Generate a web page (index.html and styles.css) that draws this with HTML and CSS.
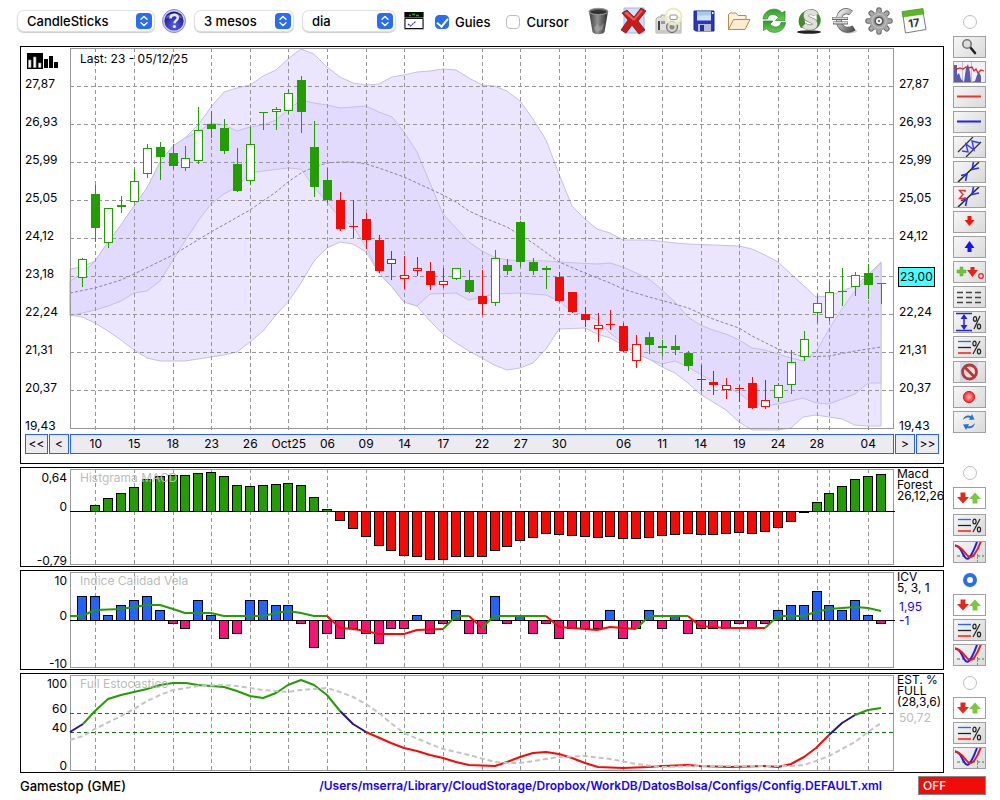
FILE: index.html
```html
<!DOCTYPE html>
<html lang="ca">
<head>
<meta charset="utf-8">
<title>Gamestop (GME)</title>
<link rel="stylesheet" href="styles.css">
</head>
<body>
<svg class="defs" aria-hidden="true">
  <defs>
    <linearGradient id="gMetal" x1="0" y1="0" x2="1" y2="1"><stop offset="0" stop-color="#f4f4f4"/><stop offset=".5" stop-color="#a0a0a0"/><stop offset="1" stop-color="#4c4c4c"/></linearGradient>
    <linearGradient id="gBin" x1="0" x2="1"><stop offset="0" stop-color="#3c3c3c"/><stop offset=".45" stop-color="#909090"/><stop offset="1" stop-color="#2c2c2c"/></linearGradient>
    <linearGradient id="gGreen" x1="0" y1="0" x2="0" y2="1"><stop offset="0" stop-color="#2f9a2c"/><stop offset="1" stop-color="#6ccc55"/></linearGradient>
    <radialGradient id="gHelp" cx=".5" cy=".75" r=".7"><stop offset="0" stop-color="#5a62e6"/><stop offset="1" stop-color="#15157e"/></radialGradient>
    <radialGradient id="gRec"><stop offset="0" stop-color="#ffb0b0"/><stop offset="1" stop-color="#f02828"/></radialGradient>
  </defs>
  <symbol id="chev" viewBox="0 0 16 16"><rect width="16" height="16" rx="4" fill="#2a6df5"/><path d="M5 6.300 8 3.500l3 2.800M5 9.700l3 2.800 3-2.800" fill="none" stroke="#fff" stroke-width="1.500" stroke-linecap="round" stroke-linejoin="round"/></symbol>
  <symbol id="updown" viewBox="1 1 31 20"><path d="M7.500 5.500h5v4.500h3.500l-6 6.500-6-6.500h3.500z" fill="#e0281c"/><path d="M19.500 16.500h5V12h3.500l-6-6.500-6 6.500h3.500z" fill="#7cc83c"/></symbol>
  <symbol id="levels" viewBox="1 1 31 20"><path d="M5 5.500h13" stroke="#2c62ff" stroke-width="1.300"/><path d="M5 11.500h13" stroke="#222" stroke-width="1.300"/><path d="M5 17h13" stroke="#f85040" stroke-width="2"/><g fill="none" stroke="#222" stroke-width="1.200"><path d="M20 18 27 5"/><ellipse cx="21.500" cy="7.500" rx="1.600" ry="2.300"/><ellipse cx="26" cy="15.500" rx="1.600" ry="2.300"/></g></symbol>
  <symbol id="cross" viewBox="1 1 31 20"><path d="M4 15h27" stroke="#2f8a20" stroke-dasharray="3 2"/><path d="M24.500 13v8" stroke="#888" stroke-dasharray="2 1"/><path d="M2 4.500c5 0 6 5 8 8.500 2 4 4 6 6 4s5-8 8-16" fill="none" stroke="#1c1cf0" stroke-width="2"/><path d="M2 4.500c6 1 8 5 11 8.500 3 4 5 4 8 1 3-4 5-8 7-14" fill="none" stroke="#e81c1c" stroke-width="2"/></symbol>
</svg>

<div class="page">
  <main class="main">
    <form class="toolbar">
      <span class="pick pick-type"><select aria-label="Tipus de gràfic"><option>CandleSticks</option></select><svg><use href="#chev"/></svg></span>
      <button type="button" class="icon help" aria-label="Ajuda"><svg viewBox="0 0 24 24"><circle cx="12" cy="12" r="11.500" fill="#c9c9ee" stroke="#8888d0"/><circle cx="12" cy="12" r="9.600" fill="url(#gHelp)"/><path d="M3.500 9.500a9 7.500 0 0 1 17 0c-5-2.500-12-2.500-17 0z" fill="#8f93ea" opacity=".6"/><path d="M8.500 9.500c0-5 7.500-5 7.300-.5-.2 2.400-3.300 2.500-3.300 5.200" fill="none" stroke="#e8e8fa" stroke-width="2.500"/><circle cx="12.400" cy="17.500" r="1.600" fill="#e8e8fa"/></svg></button>
      <span class="pick pick-span"><select aria-label="Període"><option>3 mesos</option></select><svg><use href="#chev"/></svg></span>
      <span class="pick pick-unit"><select aria-label="Interval"><option>dia</option></select><svg><use href="#chev"/></svg></span>
      <button type="button" class="icon play" aria-label="Mostra"><svg viewBox="0 0 20 18"><path d="M0 0h20v18H0z" fill="#bbb"/><path d="M.5 0h19v5.500H.5z" fill="#0a0a0a"/><path d="M5 3.500h2m1-1h3m1 1h3" stroke="#27a52a" stroke-width="1.500"/><path d="M1 6.500h18v10H1z" fill="#fff" stroke="#111"/><path d="m4 12 2.500 2 5-4.500" fill="none" stroke="#2424e0" stroke-width="1.200" stroke-dasharray="2 .6"/></svg></button>
      <label class="check"><input type="checkbox" checked><span>Guies</span></label>
      <label class="check"><input type="checkbox"><span>Cursor</span></label>
      <div class="actions">
        <button type="button" class="icon" aria-label="Esborra"><svg viewBox="0 0 28 28"><path d="M4 4.500 7.500 25c2 3 10 3 12 0L23 4.500z" fill="url(#gBin)"/><ellipse cx="13.500" cy="4.500" rx="9.500" ry="3.200" fill="#5c5c5c" stroke="#999"/><ellipse cx="13.500" cy="5" rx="7.700" ry="1.900" fill="#303030"/><path d="m9 21 3-4 3 3 4-4-2 7-6 2z" fill="#bbb" opacity=".45"/></svg></button>
        <button type="button" class="icon" aria-label="Elimina"><svg viewBox="0 0 28 28"><path d="M4 1h20v25H4z" fill="#cfe0fb" stroke="#98b8ec"/><path d="m2 6 5-3 7 7 7-9 5 3-8 10 7 9-6 4-7-9-6 8-5-3 7-10z" fill="#c81c1c" stroke="#8d1010" stroke-width=".8"/><path d="m4 6 3-1.500 7 7 7-8.500 2 1-9 10z" fill="#f07a70" opacity=".7"/></svg></button>
        <button type="button" class="icon" aria-label="Captura"><svg viewBox="0 0 28 28"><path d="M1 12l2-2h3V8h4v2h14l2 2v14H1z" fill="#e0e0dc" stroke="#999" stroke-width=".8"/><path d="M3 14h2v9H3z" fill="#444"/><path d="M6 14h4v3H6z" fill="#999"/><path d="M1 23h25v3H1z" fill="#c9c9c4"/><circle cx="17" cy="20" r="5.500" fill="#c4c4c0" stroke="#666"/><circle cx="17" cy="20" r="3.300" fill="#8a8a8a" stroke="#f4f4f4"/><circle cx="18.500" cy="9.500" r="8" fill="#fffff2" fill-opacity=".6" stroke="#eeebb8" stroke-width="2"/><rect x="15" y="8" width="7" height="4.500" rx="1" fill="#fff" stroke="#777" stroke-width=".8"/></svg></button>
        <button type="button" class="icon" aria-label="Desa"><svg viewBox="0 0 28 28"><path d="M4 4h20v20H5.500L4 22.500z" fill="#2b36bd" stroke="#1c2488"/><path d="M7 4.500h14v9H7z" fill="#cfe3f4"/><path d="M7 4.500h14v4H7z" fill="#a4cbea"/><path d="M8 17h13v7H8z" fill="#b8bcd0"/><path d="M10 18h4v6h-4z" fill="#26309c"/><path d="M22 5h1.500v2H22z" fill="#fff"/></svg></button>
        <button type="button" class="icon" aria-label="Obre"><svg viewBox="0 0 28 28"><path d="M3.500 22.500V7.500l1.500-1.500h6l2 2.500h8v4" fill="#fdf3dc" stroke="#b78a4e" stroke-linejoin="round"/><path d="m3.500 22.500 5-10H25l-5 10z" fill="#fbeccb" stroke="#b78a4e" stroke-linejoin="round"/></svg></button>
        <button type="button" class="icon" aria-label="Actualitza"><svg viewBox="0 0 28 28"><path d="M3 12C4 1 18-.5 22 6l3-2v9.500h-9.500l3-3C15 6 8.500 6.500 7.500 12z" fill="url(#gGreen)" stroke="#2b8828" stroke-width=".7"/><path d="M25.500 15.500c-1 11-15 12.500-19 6l-3 2V14H13l-3 3c3.500 4.500 10 4 11-1.500z" fill="url(#gGreen)" stroke="#2b8828" stroke-width=".7"/></svg></button>
        <button type="button" class="icon" aria-label="Dòlar"><svg viewBox="0 0 28 28"><ellipse cx="14" cy="25" rx="12" ry="1.800" fill="#222"/><path d="M6 21C0 13 6 3 15 3c-6 3-7 10-3 17zM21 5c8 5 6 17-6 19 6-4 8-11 6-19z" fill="#438c2c"/><g fill="none"><path d="M21 8c-2-4-10-4-10 1 0 5 9 3 9 8 0 4-7 5-11 1" stroke="#777a70" stroke-width="6"/><path d="M21 8c-2-4-10-4-10 1 0 5 9 3 9 8 0 4-7 5-11 1" stroke="#dfe0da" stroke-width="4.600"/></g></svg></button>
        <button type="button" class="icon" aria-label="Euro"><svg viewBox="0 0 28 28"><ellipse cx="19" cy="24" rx="8" ry="2.500" fill="#d2d2d2"/><g fill="none"><path d="M21 6c-5-4-12-1-12 7 0 9 8 12 15 8" stroke="#5a5a5a" stroke-width="6"/><path d="M21 6c-5-4-12-1-12 7 0 9 8 12 15 8" stroke="url(#gMetal)" stroke-width="4.600"/><path d="M2 11.500h16M3 16h15" stroke="#666" stroke-width="3"/><path d="M2.500 11.300h15M3.500 15.800h14" stroke="#d8d8d8" stroke-width="1.600"/></g></svg></button>
        <button type="button" class="icon" aria-label="Configuració"><svg viewBox="0 0 28 28"><g stroke="#666" stroke-width="5.500" stroke-linecap="round"><path d="M14 3v22M3 14h22M6.200 6.200l15.600 15.600M6.200 21.800 21.800 6.200"/></g><g stroke="#a8a8a8" stroke-width="3.500" stroke-linecap="round"><path d="M14 3v22M3 14h22M6.200 6.200l15.600 15.600M6.200 21.800 21.800 6.200"/></g><circle cx="14" cy="14" r="9.500" fill="#a2a2a2"/><circle cx="14" cy="14" r="7" fill="none" stroke="#c9c9c9"/><circle cx="14" cy="14" r="3.800" fill="#fff" stroke="#555" stroke-width="1.600"/><circle cx="14" cy="14" r="1.300" fill="#777"/></svg></button>
        <button type="button" class="icon" aria-label="Calendari"><svg viewBox="0 0 28 28"><path d="m2.500 5 20-3 3.500 20.500L5.500 26z" fill="#fff" stroke="#7c7c7c"/><path d="m2 4.500 21-3 .8 5.500-21 3z" fill="#5cb822" stroke="#4a9a1c" stroke-width=".6"/><text x="14" y="20" transform="rotate(-8 14 16)" class="cal">17</text></svg></button>
      </div>
    </form>

    <section class="panel price">
      <div class="scale scale-l">
        <svg class="mini" viewBox="0 0 31 16"><path d="M0 0h16v16H0z"/><path d="M1.500 7h2.500v7.500H1.500zM6.500 4H9v10.500H6.500zM11.500 10H14v4.500h-2.500z" fill="#fff" stroke="#999" stroke-width=".7"/><path d="M17 6h4v9h-4zM22 3h4v12h-4zM27 9h4v6h-4z"/></svg>
        <span>27,87</span><span>26,93</span><span>25,99</span><span>25,05</span><span>24,12</span><span>23,18</span><span>22,24</span><span>21,31</span><span>20,37</span><span>19,43</span>
      </div>
      <div class="plot">
        <svg id="price" viewBox="70 48 824 381" preserveAspectRatio="none">
          <path class="band" d="M70 269 82 267 95 261 108 242 121 225 134 206 147 188 160 162 173 146 185 138 198 125 211 107 224 92 237 88 250 85 263 76 276 70 289 58 301 49 314 54 327 67 340 77 353 83 366 85 379 84 392 77 404 75 417 72 430 71 443 69 456 70 469 78 482 85 494 86 507 91 520 101 533 119 546 140 559 174 572 206 585 219 597 229 610 233 623 240 649 240 675 243 688 244 713 245 739 246 752 249 765 255 778 262 791 274 803 285 816 297 829 296 842 291 855 286 868 275 881 262V426H868L855 425 842 419 829 417 816 415 803 417 791 428 778 430H752L739 422 726 410 713 402 700 394 688 383 675 373 662 367 649 359 636 354 623 345 610 338 597 334 585 328 559 329 546 349 533 363 520 368 507 370 494 365 482 358 469 351 456 343 443 334 430 321 417 306 404 302 392 287 379 273 366 252 353 244 340 242 327 248 314 261 301 283 288 302 276 315 263 331 250 342 237 352 224 355 211 357 185 361 160 361 147 358 134 350 121 340 108 331 95 323 82 317 70 315z"/>
          <path class="band core" d="M70 281 82 274 95 261 108 242 121 225 134 206 147 188 160 162 173 146 185 138 198 132 211 123 224 125 237 131 250 127 263 125 276 120 288 110 301 100 314 103 327 105 340 108 366 106 379 112 392 117 404 132 417 152 430 183 443 214 456 228 469 242 482 251 494 257 507 260 546 261 559 262 597 264 610 263 623 267 636 273 649 279 662 290 675 302 688 317 700 325 713 330 726 334 739 340 752 348 765 350 778 354 791 358 803 361 816 352 829 329 842 309 855 291 868 277 881 263V383H868L855 394 842 399 829 404 816 403 803 398 791 401 778 404 765 406 752 403 739 393 726 387 713 382 700 374 688 367 675 361 662 364 649 359 636 354 623 343 610 333 597 320 585 315 572 312 559 301 546 295 520 293 494 294 482 297 469 300 456 293 430 294 417 306 404 302 392 287 379 273 366 247 353 226 340 218 327 202 314 187 301 169 288 168 263 171 250 173 237 187 224 194 211 204 198 221 185 241 173 260 160 281 147 291 134 293 121 301 108 306 95 310 70 316z"/>
          <path class="mean" d="M70 293 95 288 121 280 134 274 173 255 211 232 250 210 276 192 288 182 301 173 314 167 327 163 340 162H353L366 164 379 168 404 177 430 189 443 195 456 202 469 211 482 217 507 227 520 235 533 243 559 262 585 273 610 283 623 289 649 297 675 304 688 308 713 319 739 328 752 336 778 349 803 357 829 356 855 351 881 347"/>
        </svg>
        <span class="caption last">Last: 23 - 05/12/25</span>
      </div>
      <div class="scale scale-r">
        <span>27,87</span><span>26,93</span><span>25,99</span><span>25,05</span><span>24,12</span><b class="quote">23,00</b><span>22,24</span><span>21,31</span><span>20,37</span><span>19,43</span>
      </div>
      <div class="step step-l"><button type="button">&lt;&lt;</button><button type="button">&lt;</button></div>
      <div class="dates" id="dates"></div>
      <div class="step step-r"><button type="button">&gt;</button><button type="button">&gt;&gt;</button></div>
    </section>

    <section class="panel study">
      <div class="levels levels-macd"><span>0,64</span><span>0</span><span>-0,79</span></div>
      <div class="plot">
        <svg id="macd" viewBox="70 469 824 96" preserveAspectRatio="none"></svg>
        <span class="caption">Histgrama MACD</span>
      </div>
      <div class="notes">Macd<br>Forest<br>26,12,26</div>
    </section>

    <section class="panel study">
      <div class="levels levels-icv"><span>10</span><span>0</span><span>-10</span></div>
      <div class="plot">
        <svg id="icv" viewBox="70 572 824 96" preserveAspectRatio="none"></svg>
        <span class="caption">Indice Calidad Vela</span>
      </div>
      <div class="notes">ICV<br>5, 3, 1<p class="now">1,95<br>-1</p></div>
    </section>

    <section class="panel study">
      <div class="levels levels-est"><span>100</span><span>60</span><span>40</span><span>0</span></div>
      <div class="plot">
        <svg id="est" viewBox="70 675 824 96" preserveAspectRatio="none"></svg>
        <span class="caption">Full Estocastico</span>
      </div>
      <div class="notes">EST. %<br>FULL<br>(28,3,6)<p class="past">50,72</p></div>
    </section>
  </main>

  <aside class="side">
    <div class="group group-draw">
      <input type="radio" name="pane" aria-label="Preu">
      <button type="button" aria-label="Lupa"><svg viewBox="1 1 31 20"><path d="m17 11 5 6" stroke="#222" stroke-width="2.600" stroke-linecap="round"/><circle cx="14" cy="8" r="4.200" fill="#ddd" stroke="#777" stroke-width="1.600"/></svg></button>
      <button type="button" aria-label="Volum"><svg viewBox="1 1 31 20"><path d="M1 1h31v20H1z" fill="#f1f1f8"/><path d="M9.500 1v20M18.500 1v20" stroke="#bcbcdc"/><path d="M1 4h3v10l2-2 2 6 3 3 2-14 2-4 2 8 1 10 4-1 2-6 2-3 2 4v6H1z" fill="#5c5cae"/><path d="m2 6 2 2 3-1 3 1 3-2 2 1 4-1 2 4 2-2 2 4 3-3 3 1" fill="none" stroke="#e02424" stroke-width="1.300"/></svg></button>
      <button type="button" aria-label="Línia vermella"><svg viewBox="1 1 31 20"><path d="M4 10.500h24" stroke="#e83434" stroke-width="2"/></svg></button>
      <button type="button" aria-label="Línia blava"><svg viewBox="1 1 31 20"><path d="M4 10.500h24" stroke="#2020f8" stroke-width="2"/></svg></button>
      <button type="button" aria-label="Canal"><svg viewBox="1 1 31 20"><path d="M5 16 20 1M13 21 28 6" stroke="#333" stroke-width="1.300"/><path d="m9 15 6 1-2-8 8 6-2-9 8 2" fill="none" stroke="#3c3cf4" stroke-width="1.400"/></svg></button>
      <button type="button" aria-label="Tendència"><svg viewBox="1 1 31 20"><path d="M5 21 26 1" stroke="#173020" stroke-width="1.500"/><path d="M8 14.500 14 13l-1.500 7M20.500 1 19 8.500l7-1.500" fill="none" stroke="#2c2ce0" stroke-width="1.600"/></svg></button>
      <button type="button" aria-label="Regressió"><svg viewBox="1 1 31 20"><path d="M5 21 26 1" stroke="#173020" stroke-width="1.500"/><path d="M8 14.500 14 13l-1.500 7M20.500 1 19 8.500l7-1.500" fill="none" stroke="#2c2ce0" stroke-width="1.600"/><path d="M12 6V4.500H6.500L10 8.500l-3.500 4H12V11" fill="none" stroke="#e03030" stroke-width="1.400"/></svg></button>
      <button type="button" aria-label="Venda"><svg viewBox="1 1 31 20"><path d="M14.500 5h4v4h3l-5 6-5-6h3z" fill="#fa1408"/></svg></button>
      <button type="button" aria-label="Compra"><svg viewBox="1 1 31 20"><path d="M14.500 16h4v-4h3l-5-7-5 7h3z" fill="#1414f4"/></svg></button>
      <button type="button" aria-label="Operacions"><svg viewBox="1 1 31 20"><path d="M7 6h3v3h3v3h-3v3H7v-3H4V9h3z" fill="#6cc43c" stroke="#57a82c" stroke-width=".5"/><path d="M17.500 6h4v3h3.500l-5.500 7-5.500-7h3.500z" fill="#e42418"/><circle cx="28" cy="15" r="2.300" fill="none" stroke="#e42418" stroke-width="1.200"/></svg></button>
      <button type="button" aria-label="Guions"><svg viewBox="1 1 31 20"><path d="M4 6.500h24M4 11.500h24M4 16.500h24" stroke="#444" stroke-width="1.500" stroke-dasharray="6 3"/></svg></button>
      <button type="button" aria-label="Rang"><svg viewBox="1 1 31 20"><path d="M3 2.500h16M3 19.500h16M11 4v14" stroke="#2424e0" stroke-width="1.500"/><path d="m11 3 3.500 5h-7zM11 19l3.500-5h-7z" fill="#2424e0"/><g fill="none" stroke="#222" stroke-width="1.200"><path d="M21 18 27 5"/><ellipse cx="22" cy="8" rx="1.600" ry="2.300"/><ellipse cx="26" cy="15.500" rx="1.600" ry="2.300"/></g></svg></button>
      <button type="button" aria-label="Nivells"><svg><use href="#levels"/></svg></button>
      <button type="button" aria-label="Prohibit"><svg viewBox="1 1 31 20"><path d="M7 1h18v20H7z" fill="#d4d8ea"/><circle cx="16.500" cy="11" r="7" fill="#ecdcdc" stroke="#b03c3c" stroke-width="2.800"/><path d="m11.500 6 10 10" stroke="#b03c3c" stroke-width="2.800"/></svg></button>
      <button type="button" aria-label="Grava"><svg viewBox="1 1 31 20"><circle cx="16" cy="11" r="5.600" fill="url(#gRec)" stroke="#d82020"/></svg></button>
      <button type="button" aria-label="Recarrega"><svg viewBox="1 1 31 20"><path d="M10 9c1-5 6-5 8-4l1-2 2.500 5.500L16 9l1-2c-3-1-5 0-7 2zM22 12c-1 5-5 6-8 5l-1 2-3-5.500 6-.5-1 2c3 1 5-1 7-3z" fill="#2c74cc"/></svg></button>
    </div>
    <div class="group group-macd">
      <input type="radio" name="pane" aria-label="MACD">
      <button type="button" class="plain" aria-label="Mou MACD"><svg><use href="#updown"/></svg></button>
      <button type="button" aria-label="Nivells MACD"><svg><use href="#levels"/></svg></button>
      <button type="button" aria-label="Creuaments MACD"><svg><use href="#cross"/></svg></button>
    </div>
    <div class="group">
      <input type="radio" name="pane" aria-label="ICV" checked>
      <button type="button" class="plain" aria-label="Mou ICV"><svg><use href="#updown"/></svg></button>
      <button type="button" aria-label="Nivells ICV"><svg><use href="#levels"/></svg></button>
      <button type="button" aria-label="Creuaments ICV"><svg><use href="#cross"/></svg></button>
    </div>
    <div class="group">
      <input type="radio" name="pane" aria-label="Estocàstic">
      <button type="button" class="plain" aria-label="Mou Estocàstic"><svg><use href="#updown"/></svg></button>
      <button type="button" aria-label="Nivells Estocàstic"><svg><use href="#levels"/></svg></button>
      <button type="button" aria-label="Creuaments Estocàstic"><svg><use href="#cross"/></svg></button>
    </div>
  </aside>
</div>

<footer class="status">
  <span class="symbol">Gamestop (GME)</span>
  <a class="file" href="#">/Users/mserra/Library/CloudStorage/Dropbox/WorkDB/DatosBolsa/Configs/Config.DEFAULT.xml</a>
  <button type="button" class="off">OFF</button>
</footer>
<script src="charts.js"></script>
</body>
</html>
```
FILE: styles.css
```css
* { box-sizing: border-box; }
body {
  margin: 0;
  background: #fff;
  color: #000;
  font-family: Inter, "Liberation Sans", sans-serif;
  font-size: 12px;
  line-height: 14px;
}
button, select { font: inherit; color: inherit; }
svg { display: block; }
.defs { position: absolute; width: 0; height: 0; }

.page { display: flex; gap: 9px; padding: 0 14px 0 18px; }
.main { flex: 1; min-width: 0; }

/* toolbar */
.toolbar { display: flex; align-items: center; height: 42px; margin-bottom: 4px; font-size: 13px; font-weight: 500; }
.pick { display: grid; align-items: center; }
.pick select {
  grid-area: 1 / 1;
  width: 100%;
  height: 20px;
  padding: 0 24px 0 9px;
  border: 0;
  border-radius: 6px;
  background: #fff;
  box-shadow: 0 0 1px 1px #e2e2e2, 0 1px 1px 1px #cdcdcd;
  appearance: none;
}
.pick svg { grid-area: 1 / 1; justify-self: end; width: 16px; height: 16px; margin-right: 2px; pointer-events: none; }
.pick-type { width: 136px; }
.pick-span { width: 98px; }
.pick-unit { width: 92px; margin-left: 10px; }
.icon { padding: 0; border: 0; background: none; }
.icon svg { width: 28px; height: 28px; }
.help { margin: 0 9px 0 8px; }
.help svg { width: 24px; height: 24px; }
.play { margin: 0 11px 0 9px; }
.play svg { width: 20px; height: 18px; }
.cal { font-size: 11px; font-weight: 700; text-anchor: middle; fill: #333; }
.check { display: flex; align-items: center; gap: 6px; margin-right: 16px; padding-top: 2px; }
.check input {
  display: grid;
  place-items: center;
  width: 14px;
  height: 14px;
  margin: 0;
  border: 1px solid #bdbdbd;
  border-radius: 4px;
  background: #fff;
  appearance: none;
}
.check input:checked { border-color: #2a6df5; background: #2a6df5; }
.check input:checked::before {
  content: "";
  width: 5px;
  height: 9px;
  margin-bottom: 2px;
  border: solid #fff;
  border-width: 0 2px 2px 0;
  transform: rotate(40deg);
}
.actions { display: flex; gap: 7px; }

/* chart panels */
.panel { display: grid; grid-template-columns: 49px minmax(0, 1fr) 49px; margin: 0 0 3px 2px; border: 1px solid #000; }
.price { padding-bottom: 9px; }
.plot { position: relative; margin-top: 1px; }
.plot svg { width: 100%; height: 96px; overflow: visible; }
.price .plot svg { height: 381px; }
.caption { position: absolute; left: 10px; top: 2px; color: #bbb; }
.last { top: 4px; color: #000; }
.scale { display: flex; flex-direction: column; padding-left: 4px; }
.scale span { height: 38px; }
.scale span:last-child { height: 10px; }
.mini { width: 31px; height: 16px; margin: 6px 0 8px 2px; }
.scale-r { padding-top: 30px; align-items: flex-start; }
.quote { height: 20px; margin-bottom: 18px; padding: 2px 1px; border: 1px solid #000; background: #4ff; font-weight: 400; }
.scale-r span { padding-left: 1px; }
.step { display: flex; gap: 1px; margin-top: 5px; }
.step-l { padding-left: 4px; }
.step-r { padding-left: 1px; }
.step button { width: 20px; height: 20px; padding: 0; border: 1px solid #2a62f0; background: #ebebf0; }
.step-l button:first-child, .step-r button:last-child { width: 23px; }
.dates {
  display: grid;
  grid-template-columns: repeat(64, minmax(0, 1fr));
  align-items: center;
  height: 20px;
  margin-top: 5px;
  background: #ebebf0;
  outline: 1px solid #2a62f0;
  outline-offset: -1px;
  text-align: center;
}
.dates span { grid-row: 1; white-space: nowrap; }
.levels { display: grid; align-content: start; padding: 3px 3px 0 0; text-align: right; }
.levels-macd { grid-template-rows: 29px 54px 14px; }
.levels-icv { grid-template-rows: 35px 48px 14px; }
.levels-est { grid-template-rows: 25px 19px 38px 14px; }
.study { height: 100px; }
.notes { padding-left: 3px; line-height: 11px; white-space: nowrap; }
.notes p { margin: 7px 0 0 2px; line-height: 14px; }
.notes .past { margin-top: 4px; }
.now { color: #1a00ff; }
.past { color: #bbb; }

/* chart marks */
.plot path, .plot line, .plot rect { vector-effect: non-scaling-stroke; }
.grid, .bars, .candles { shape-rendering: crispEdges; }
.band { fill: #ebe6fe; stroke: #c6c0e4; }
.core { fill: #e3dbfe; }
.mean { fill: none; stroke: #8a80a8; stroke-dasharray: 3 2; }
.grid line { stroke: #969696; stroke-dasharray: 4 3; }
.grid rect { fill: none; stroke: #999; }
.zero { stroke: #000; shape-rendering: crispEdges; }
.bars rect { stroke: #000; }
.curve { fill: none; stroke-width: 2; stroke-linejoin: round; }
.up { stroke: #249c04; }
.down { stroke: #f20c08; }
.between { stroke: #2c1480; }
.slow { fill: none; stroke: #c4c4c4; stroke-width: 2; stroke-dasharray: 5 3; }
.high { stroke: #f20c08; stroke-dasharray: 4 3; }
.low { stroke: #107010; stroke-dasharray: 4 3; }

/* side tools */
.side { width: 33px; padding-top: 15px; }
.group { display: flex; flex-direction: column; align-items: center; gap: 3px; margin-bottom: 10px; }
.group:last-child { margin-bottom: 0; }
.group-draw { margin-bottom: 33px; }
.group-macd { gap: 5px; }
.group input {
  width: 14px;
  height: 14px;
  margin: 0 0 4px;
  border: 1px solid #bdbdbd;
  border-radius: 50%;
  background: #fff;
  appearance: none;
}
.group-macd input { margin-bottom: 2px; }
.group input:checked { border: 4px solid #2a6df5; }
.group button { width: 33px; height: 22px; padding: 0; border: 1px solid #a0a0a0; background: linear-gradient(135deg, #f6f6f6, #dadada); }
.group .plain { background: #fff; }
.group button svg { width: 31px; height: 20px; }

/* status line */
.status { display: flex; align-items: center; padding: 0 14px 0 20px; font-weight: 500; }
.symbol { font-size: 13px; }
.file { margin: 0 36px 0 auto; color: #1a00ff; font-weight: 600; text-decoration: none; }
.off { width: 68px; height: 19px; padding: 0 4px; border: 1px solid #888; background: #f20c08; color: #fff; text-align: left; }
```
FILE: charts.js
```js
const UP = '#249c04', DOWN = '#f20c08';
const x = i => Math.floor(82.85 + 12.88 * i);
const days = [1, 4, 7, 10, 13, 16, 19, 22, 25, 28, 31, 34, 37, 39, 42, 45, 48, 51, 54, 57, 58, 61];
const names = ['10', '15', '18', '23', '26', 'Oct25', '06', '09', '14', '17', '22', '27', '30', '', '06', '11', '14', '19', '24', '28', '', '04'];

function add(parent, tag, attrs) {
  const el = document.createElementNS('http://www.w3.org/2000/svg', tag);
  for (const k in attrs) el.setAttribute(k, attrs[k]);
  parent.appendChild(el);
  return el;
}
function line(parent, x1, y1, x2, y2, cls) {
  add(parent, 'line', { x1, y1, x2, y2, class: cls || '' });
}
function grid(svg, top, bottom, rows) {
  const g = add(svg, 'g', { class: 'grid' });
  days.forEach(d => line(g, x(d) + .5, top, x(d) + .5, bottom + 2));
  rows.forEach(y => line(g, 70, y + .5, 894, y + .5));
  add(g, 'rect', { x: 70.5, y: top + .5, width: 823, height: bottom - top - 1 });
}
function bars(svg, zero, values, first, up, down) {
  const g = add(svg, 'g', { class: 'bars' });
  values.forEach((v, n) => {
    const y = Math.min(v, zero), h = Math.max(1, Math.abs(v - zero));
    add(g, 'rect', { x: x(n + first) - 4.5, y: y + .5, width: 9, height: h, fill: v < zero ? up : down });
  });
  line(svg, 70, zero + .5, 895, zero + .5, 'zero');
}
function curve(svg, cls, d) { add(svg, 'path', { class: cls, d: 'M' + d }); }

// high, body top, body bottom, low, kind (upper case is a filled body)
const candles = `258 259 278 287 g|185 194 228 242 G|208 208 243 248 g|196 205 207 213 G|169 181 202 203 g|144 148 174 178 g|142 147 157 180 G|144 153 166 169 G|146 158 168 171 g|107 130 161 164 g|111 124 129 138 G|119 128 151 154 G|148 164 191 192 G|127 144 181 185 g|112 112 113 130 G|107 109 112 130 g|89 93 111 114 g|76 80 112 133 G|121 147 187 197 G|168 180 200 203 G|192 200 229 231 R|200 226 227 238 R|213 219 240 249 R|235 240 271 273 R|251 259 264 280 r|256 275 279 289 r|257 268 271 276 r|262 271 285 290 R|268 281 285 288 r|268 268 279 280 g|270 280 292 293 G|270 296 304 315 R|250 258 303 306 g|259 265 271 275 G|221 222 262 267 G|258 262 271 275 G|266 268 270 289 G|272 277 301 302 R|292 292 312 313 R|307 314 320 327 R|313 325 329 342 r|310 324 325 330 R|323 326 351 352 R|335 344 361 368 r|332 337 345 354 G|340 346 348 356 G|335 346 350 355 G|351 353 366 371 G|365 379 380 390 R|371 382 385 395 R|378 385 390 399 r|385 388 389 402 R|377 383 408 409 R|380 400 407 409 r|383 385 398 402 g|350 362 385 394 g|331 339 357 361 g|294 303 313 323 g|281 292 318 321 g|268 291 292 306 G|272 275 287 296 g|264 273 285 299 G|283 283 284 304 G`;

const price = document.getElementById('price');
grid(price, 48, 429, [86, 124, 162, 200, 238, 276, 314, 352, 390]);
const cg = add(price, 'g', { class: 'candles' });
candles.split('|').forEach((row, i) => {
  const [hi, top, bot, lo, kind] = row.split(' ');
  const color = kind.toUpperCase() === 'G' ? UP : DOWN;
  add(cg, 'rect', { x: x(i), y: hi, width: 1, height: lo - hi, fill: color });
  if (kind === kind.toUpperCase()) add(cg, 'rect', { x: x(i) - 4, y: top, width: 9, height: bot - top, fill: color });
  else add(cg, 'rect', { x: x(i) - 3.5, y: +top + .5, width: 8, height: bot - top - 1, fill: '#fff', stroke: color });
});

const dates = document.getElementById('dates');
days.forEach((d, n) => {
  if (!names[n]) return;
  const s = document.createElement('span');
  s.textContent = names[n];
  s.style.gridColumn = d + ' / span 4';
  dates.appendChild(s);
});

const macd = document.getElementById('macd');
grid(macd, 469, 565, []);
bars(macd, 511, [505, 498, 493, 487, 479, 476, 475, 475, 473, 472, 476, 485, 486, 485, 484, 483, 485, 497, 509, 520, 528, 536, 545, 550, 555, 556, 559, 559, 556, 556, 556, 550, 546, 540, 537, 533, 534, 535, 536, 537, 536, 538, 538, 537, 535, 534, 533, 534, 534, 533, 532, 533, 531, 527, 521, 512, 502, 493, 486, 479, 476, 474], 1, UP, DOWN);

const icv = document.getElementById('icv');
grid(icv, 572, 668, []);
bars(icv, 620, [596, 596, 615, 605, 600, 596, 610, 623, 628, 600, 615, 638, 633, 600, 600, 605, 605, 623, 647, 633, 638, 628, 633, 643, 628, 628, 615, 633, 623, 610, 633, 633, 596, 623, 615, 633, 623, 638, 628, 628, 628, 610, 638, 628, 610, 628, 615, 633, 628, 628, 628, 623, 628, 623, 610, 605, 605, 591, 605, 610, 600, 615, 623], 0, '#2464fc', '#f41478');
curve(icv, 'curve up', '70 616H82L95 610 121 609 134 607 147 605H160L173 609 185 613H211L224 616H263L276 613 288 611 301 613 314 616H327');
curve(icv, 'curve down', '327 616 340 628 353 629 366 631 379 634H404L417 630 443 629');
curve(icv, 'curve up', '443 629 456 616H469');
curve(icv, 'curve down', '469 616 482 628');
curve(icv, 'curve up', '482 628 494 616H546');
curve(icv, 'curve down', '546 616 559 627 572 628 597 630 610 627 636 629');
curve(icv, 'curve up', '636 629 649 616H688');
curve(icv, 'curve down', '688 616 700 626 713 627 726 628H765');
curve(icv, 'curve up', '765 628 778 616H803L816 612 829 609 855 607 868 608 881 611');

const est = document.getElementById('est');
grid(est, 675, 771, []);
line(est, 70, 713.5, 895, 713.5, 'high');
line(est, 70, 732.5, 895, 732.5, 'low');
curve(est, 'curve between', '70 732 83 724');
curve(est, 'curve up', '83 724 95 711 108 699 121 695 147 689 160 685 173 683H186L198 685 224 687 237 691 250 696 263 698 276 693 288 685 301 680 314 685 327 695 340 711');
curve(est, 'curve between', '340 711 353 724 366 732');
curve(est, 'curve down', '366 732 391 743 404 748 417 751 430 755 443 758 456 762 469 765 495 766 507 762 520 757 533 753 546 752 559 754 572 758 585 763 598 767 623 768 649 767 662 766 688 765 700 766 730 767 765 766 778 767 791 764 804 757 816 748 829 735');
curve(est, 'curve between', '829 735 842 723 855 715');
curve(est, 'curve up', '855 715 868 710 881 708');
curve(est, 'slow', '70 740 83 736 95 729 121 716 134 709 147 701 160 695 173 690 198 686 224 685 237 686 263 690 288 692 301 690 327 688 340 692 353 697 366 704 379 713 392 724 404 733 430 744 443 749 469 755 495 762 507 763 520 763 559 757 585 756 610 759 636 764 662 767 700 766 765 766 791 766 804 765 816 761 829 756 855 742 868 732 881 723');
```
